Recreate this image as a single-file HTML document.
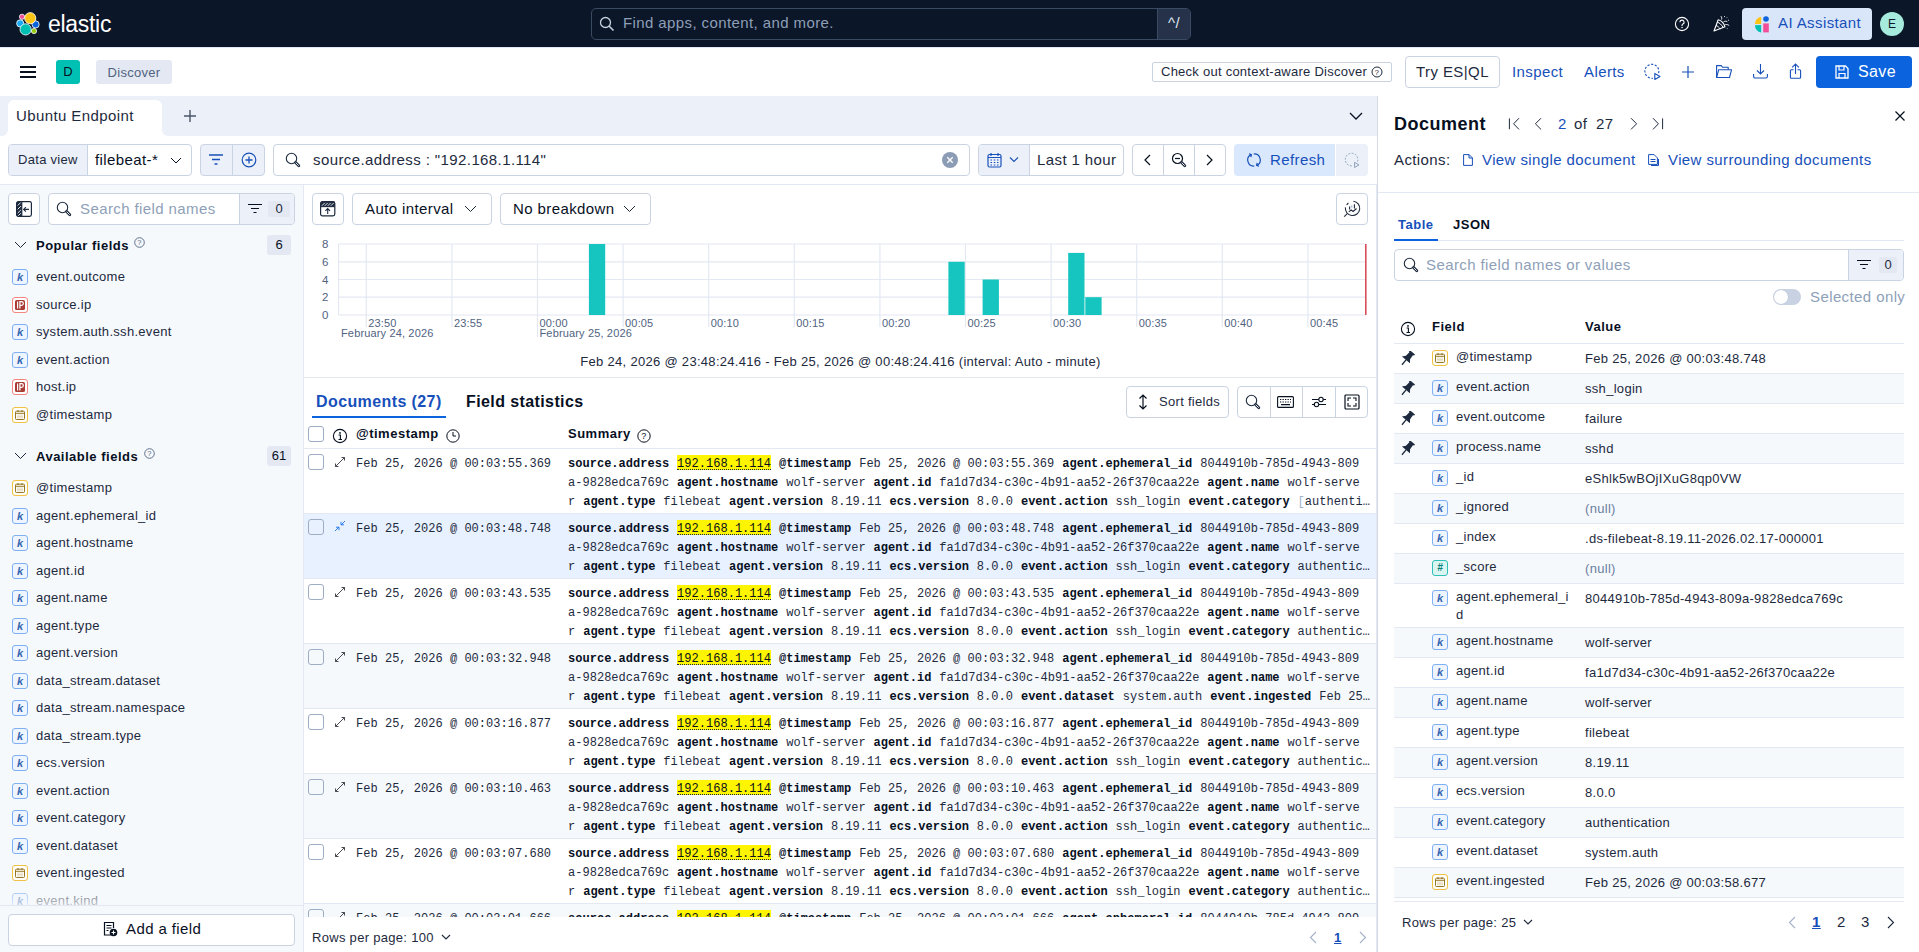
<!DOCTYPE html><html><head><meta charset="utf-8"><title>Discover - Elastic</title><style>
*{box-sizing:border-box}
html,body{margin:0;padding:0}
body{width:1919px;height:952px;overflow:hidden;position:relative;background:#fff;font-family:"Liberation Sans",sans-serif;color:#1d2a3e;font-size:15px;letter-spacing:.4px}
.a{position:absolute}
.s14{font-size:15px;letter-spacing:.4px}
.s12{font-size:13px;letter-spacing:.3px}
.b12{font-size:13px;font-weight:bold;letter-spacing:.5px}
.b14{font-size:16px;font-weight:bold;letter-spacing:.4px}
.mono{font-family:"Liberation Mono",monospace;font-size:12px;letter-spacing:.024px}
.nw{white-space:nowrap}
svg{display:block}
.btn{position:absolute;border:1px solid #cad3e2;border-radius:4px;background:#fff}
.link{color:#1750ba}
.tok{position:absolute;width:16px;height:16px;border-radius:3px;border:1px solid #7fb0f5;background:#eef5ff;color:#3565b0;font-size:11px;font-weight:bold;font-style:italic;text-align:center;line-height:14px;letter-spacing:0}
.tok.ip{border-color:#e06b6b;background:#b74b40;color:#fff;font-style:normal;font-size:9px}
.tok.date{border-color:#e0b11a;background:#fdf3d8;color:#8a6a0a}
.tok.num{border-color:#2fbfb6;background:#d9f6f3;color:#0a7d77}
</style></head><body>
<div class="a" style="left:0;top:0;width:1919px;height:47px;background:#0b1628"></div>
<svg class="a" style="left:14px;top:10px" width="28" height="28" viewBox="14 10 28 28">
<g stroke="#fff" stroke-width=".8">
<circle cx="22" cy="16.8" r="2.6" fill="#f04e98"/><circle cx="20.2" cy="23.4" r="3.6" fill="#1ba9f5"/>
<circle cx="35.6" cy="24.4" r="3.6" fill="#0b64dd"/><circle cx="34" cy="31" r="2.6" fill="#93c90e"/>
<circle cx="30.2" cy="18.2" r="5.6" fill="#fec514"/><circle cx="25.6" cy="29.4" r="5.6" fill="#00bfb3"/></g></svg>
<div class="a nw" style="left:48px;top:10px;font-size:23px;letter-spacing:-.3px;color:#fff;line-height:28px">elastic</div>
<div class="a" style="left:591px;top:8px;width:600px;height:32px;border:1px solid #3b4a63;border-radius:5px;background:#0b1628"></div>
<div class="a" style="left:1157px;top:9px;width:33px;height:30px;background:#25324a;border-radius:0 4px 4px 0;border-left:1px solid #3b4a63;color:#dfe5ef;font-size:15px;text-align:center;line-height:28px">^/</div>
<svg class="a" style="left:599px;top:16px" width="16" height="16" viewBox="0 0 16 16"><circle cx="6.5" cy="6.5" r="5" fill="none" stroke="#c7d0dd" stroke-width="1.3"/><path d="M10 10l4.5 4.5" stroke="#c7d0dd" stroke-width="1.6"/></svg>
<div class="a nw" style="left:623px;top:14px;color:#8e9fb8;line-height:18px">Find apps, content, and more.</div>
<svg class="a" style="left:1674px;top:16px" width="16" height="16" viewBox="0 0 16 16"><circle cx="8" cy="8" r="6.6" fill="none" stroke="#fff" stroke-width="1.1"/><path d="M5.9 6.2a2.1 2.1 0 1 1 3 1.9c-.6.3-.9.7-.9 1.3v.5" fill="none" stroke="#fff" stroke-width="1.1"/><circle cx="8" cy="11.6" r=".75" fill="#fff"/></svg>
<svg class="a" style="left:1713px;top:15px" width="18" height="17" viewBox="0 0 18 17"><path d="M1 16l4.2-11.2c2.6.6 5.6 3.4 6.8 7z" fill="none" stroke="#fff" stroke-width="1.1" stroke-linejoin="round"/><path d="M3 10.6c1.6.4 3.4 1.8 4.3 3.6M4.3 7.2c2.2.6 4.4 2.6 5.6 5" fill="none" stroke="#fff" stroke-width="1"/><path d="M8.5 4.5c.5-1.3.2-2.4-.6-3.3M10.5 7c1.2-.9 2.6-1 3.8-.4M12.3 9.6c1.4-.3 2.8.1 3.9 1M11.5 1.2v.8M14 2.5l-.5.6M16 5.2h-.8M13.8 13l.5.6" fill="none" stroke="#fff" stroke-width="1"/></svg>
<div class="a" style="left:1742px;top:8px;width:130px;height:32px;background:#d9e6f9;border-radius:4px"></div>
<svg class="a" style="left:1755px;top:16px" width="15" height="17" viewBox="0 0 15 17"><path d="M0 8A7 7 0 0 1 6.2 .8V8z" fill="#fec514"/><path d="M6.2 9v7.4A7 7 0 0 1 0 9.2z" fill="#00bfb3"/><circle cx="11" cy="3" r="2.8" fill="#0b64dd"/><rect x="8.2" y="7.4" width="5.6" height="9" fill="#f04e98"/></svg>
<div class="a nw" style="left:1778px;top:14px;color:#1750ba;line-height:18px">AI Assistant</div>
<div class="a" style="left:1880px;top:12px;width:24px;height:24px;border-radius:50%;background:#a6e9dd;color:#0b1628;font-size:12px;text-align:center;line-height:24px;letter-spacing:0">E</div>
<div class="a" style="left:0;top:47px;width:1919px;height:49px;background:#fff;border-top:1px solid #e3e8f2"></div>
<div class="a" style="left:20px;top:66px;width:16px;height:2px;background:#07101f;box-shadow:0 5px 0 #07101f,0 10px 0 #07101f"></div>
<div class="a" style="left:56px;top:60px;width:24px;height:24px;border-radius:3px;background:#00bfb3;color:#07101f;font-size:13px;text-align:center;line-height:24px;letter-spacing:0">D</div>
<div class="a nw" style="left:96px;top:60px;width:76px;height:24px;border-radius:3px;background:#e3e8f2;color:#516381;font-size:13px;text-align:center;line-height:26px;letter-spacing:.3px">Discover</div>
<div class="a nw" style="left:1152px;top:62px;width:240px;height:20px;border:1px solid #cad3e2;border-radius:2px;font-size:13px;line-height:18px;padding-left:8px;letter-spacing:.25px;color:#1d2a3e">Check out context-aware Discover</div>
<svg class="a" style="left:1371px;top:66px" width="12" height="12" viewBox="0 0 12 12"><circle cx="6" cy="6" r="5" fill="none" stroke="#1d2a3e" stroke-width="1"/><text x="6" y="9" font-size="8" text-anchor="middle" fill="#1d2a3e" font-family="Liberation Sans">?</text></svg>
<div class="btn nw" style="left:1405px;top:56px;width:95px;height:32px;text-align:center;line-height:30px;color:#1d2a3e">Try ES|QL</div>
<div class="a nw link" style="left:1512px;top:62px;line-height:20px">Inspect</div>
<div class="a nw link" style="left:1584px;top:62px;line-height:20px">Alerts</div>
<svg class="a" style="left:1644px;top:63px" width="18" height="18" viewBox="0 0 18 18"><path d="M14.6 10.2A7 7 0 1 0 9 15.2" fill="none" stroke="#1750ba" stroke-width="1.1" stroke-dasharray="2.2 1.6"/><path d="M10.8 10.4v6l5.2-3z" fill="#fff" stroke="#1750ba" stroke-width="1.1" stroke-linejoin="round"/></svg>
<svg class="a" style="left:1681px;top:65px" width="14" height="14" viewBox="0 0 14 14"><path d="M7 1v12M1 7h12" stroke="#1750ba" stroke-width="1.2"/></svg>
<svg class="a" style="left:1715px;top:64px" width="18" height="15" viewBox="0 0 18 15"><path d="M1.6 13.5V1.6h4.6l1.5 1.7h5.5v2.4" fill="none" stroke="#1750ba" stroke-width="1.1" stroke-linejoin="round"/><path d="M1.6 13.5l2.1-7.8h12.9l-2.1 7.8z" fill="none" stroke="#1750ba" stroke-width="1.1" stroke-linejoin="round"/></svg>
<svg class="a" style="left:1752px;top:63px" width="17" height="17" viewBox="0 0 17 17"><path d="M8.5 1v10M5 7.5l3.5 3.5L12 7.5" fill="none" stroke="#1750ba" stroke-width="1.1"/><path d="M1.6 11v2.6a1.4 1.4 0 0 0 1.4 1.4h11a1.4 1.4 0 0 0 1.4-1.4V11" fill="none" stroke="#1750ba" stroke-width="1.1"/></svg>
<svg class="a" style="left:1789px;top:63px" width="13" height="17" viewBox="0 0 13 17"><path d="M6.5 11V1.2M3.2 4.4L6.5 1.1l3.3 3.3" fill="none" stroke="#1750ba" stroke-width="1.1"/><path d="M4.5 6.8H2.4a1 1 0 0 0-1 1v6.4a1 1 0 0 0 1 1h8.2a1 1 0 0 0 1-1V7.8a1 1 0 0 0-1-1H8.5" fill="none" stroke="#1750ba" stroke-width="1.1"/></svg>
<div class="a" style="left:1816px;top:56px;width:96px;height:32px;background:#0b64dd;border-radius:4px"></div>
<svg class="a" style="left:1834px;top:64px" width="16" height="16" viewBox="0 0 16 16"><path d="M2 2h9.5L14 4.5V14H2z" fill="none" stroke="#fff" stroke-width="1.3"/><path d="M5 2v4h5V2M5 14V9.5h6V14" fill="none" stroke="#fff" stroke-width="1.2"/></svg>
<div class="a nw" style="left:1858px;top:62px;line-height:20px;color:#fff;font-size:16px">Save</div>
<div class="a" style="left:0;top:96px;width:8px;height:40px;background:#ecf1f9;border-radius:0 0 6px 0"></div>
<div class="a" style="left:162px;top:96px;width:1215px;height:40px;background:#ecf1f9;border-radius:0 0 0 6px"></div>
<div class="a" style="left:0;top:96px;width:1377px;height:14px;background:#ecf1f9"></div>
<div class="a nw" style="left:8px;top:100px;width:154px;height:36px;background:#fff;border-radius:6px 6px 0 0;padding-left:8px;line-height:31px">Ubuntu Endpoint</div>
<svg class="a" style="left:184px;top:110px" width="12" height="12" viewBox="0 0 12 12"><path d="M6 0v12M0 6h12" stroke="#4a5568" stroke-width="1.4"/></svg>
<svg class="a" style="left:1349px;top:112px" width="14" height="9" viewBox="0 0 14 9"><path d="M1 1l6 6 6-6" fill="none" stroke="#07101f" stroke-width="1.3"/></svg>
<div class="a" style="left:0;top:184px;width:1377px;height:1px;background:#e3e8f2"></div>
<div class="btn" style="left:8px;top:144px;width:184px;height:32px;background:#fff"></div>
<div class="a" style="left:9px;top:145px;width:79px;height:30px;background:#ecf1f9;border-right:1px solid #cad3e2;border-radius:3px 0 0 3px"></div>
<div class="a nw s12" style="left:18px;top:152px;line-height:16px;color:#1d2a3e">Data view</div>
<div class="a nw" style="left:95px;top:151px;line-height:18px;color:#07101f">filebeat-*</div>
<svg class="a" style="left:170px;top:157px" width="12" height="8" viewBox="0 0 12 8"><path d="M1 1l5 5 5-5" fill="none" stroke="#07101f" stroke-width="1"/></svg>
<div class="btn" style="left:200px;top:144px;width:65px;height:32px;background:#ecf1f9"></div>
<div class="a" style="left:232px;top:145px;width:1px;height:30px;background:#cad3e2"></div>
<svg class="a" style="left:208px;top:153px" width="16" height="14" viewBox="0 0 16 14"><path d="M1 2h14M4 6.5h8M6.5 11h3" stroke="#1750ba" stroke-width="1.3"/></svg>
<svg class="a" style="left:241px;top:152px" width="16" height="16" viewBox="0 0 16 16"><circle cx="8" cy="8" r="6.8" fill="none" stroke="#1750ba" stroke-width="1.2"/><path d="M8 4.5v7M4.5 8h7" stroke="#1750ba" stroke-width="1.3"/></svg>
<div class="btn" style="left:273px;top:144px;width:697px;height:32px"></div>
<svg class="a" style="left:285px;top:152px" width="16" height="16" viewBox="0 0 16 16"><circle cx="6.5" cy="6.5" r="5.2" fill="none" stroke="#1d2a3e" stroke-width="1.1"/><path d="M10.6 10.6l3.2 3.2" stroke="#1d2a3e" stroke-width="2.8" stroke-linecap="round"/><path d="M10.9 10.9l2.6 2.6" stroke="#fff" stroke-width=".9" stroke-linecap="round"/></svg>
<div class="a nw" style="left:313px;top:151px;line-height:18px;color:#1d2a3e">source.address : "192.168.1.114"</div>
<svg class="a" style="left:942px;top:152px" width="16" height="16" viewBox="0 0 16 16"><circle cx="8" cy="8" r="8" fill="#8d9cb5"/><path d="M5.3 5.3l5.4 5.4M10.7 5.3l-5.4 5.4" stroke="#fff" stroke-width="1.3"/></svg>
<div class="btn" style="left:978px;top:144px;width:146px;height:32px"></div>
<div class="a" style="left:979px;top:145px;width:51px;height:30px;background:#ecf1f9;border-right:1px solid #cad3e2;border-radius:3px 0 0 3px"></div>
<svg class="a" style="left:987px;top:152px" width="15" height="16" viewBox="0 0 15 16"><rect x="1" y="2.5" width="13" height="12.5" rx="1.5" fill="none" stroke="#1750ba" stroke-width="1.2"/><path d="M1 5.5h13M4 1v3M11 1v3" stroke="#1750ba" stroke-width="1.2"/><path d="M3.5 8h1.5M6.8 8h1.5M10 8h1.5M3.5 10.5h1.5M6.8 10.5h1.5M10 10.5h1.5M3.5 13h1.5M6.8 13h1.5M10 13h1.5" stroke="#1750ba" stroke-width="1.2"/></svg>
<svg class="a" style="left:1009px;top:157px" width="10" height="6" viewBox="0 0 10 6"><path d="M1 .5l4 4 4-4" fill="none" stroke="#1750ba" stroke-width="1.1"/></svg>
<div class="a nw" style="left:1037px;top:151px;line-height:18px;color:#1d2a3e">Last 1 hour</div>
<div class="btn" style="left:1132px;top:144px;width:94px;height:32px"></div>
<div class="a" style="left:1163px;top:145px;width:1px;height:30px;background:#cad3e2"></div>
<div class="a" style="left:1194px;top:145px;width:1px;height:30px;background:#cad3e2"></div>
<svg class="a" style="left:1143px;top:154px" width="8" height="12" viewBox="0 0 8 12"><path d="M7 1L2 6l5 5" fill="none" stroke="#07101f" stroke-width="1.2"/></svg>
<svg class="a" style="left:1171px;top:152px" width="16" height="16" viewBox="0 0 16 16"><circle cx="6.5" cy="6.5" r="5" fill="none" stroke="#07101f" stroke-width="1.2"/><path d="M4 6.5h5" stroke="#07101f" stroke-width="1.2"/><path d="M10.6 10.6l3.2 3.2" stroke="#1d2a3e" stroke-width="2.8" stroke-linecap="round"/><path d="M10.9 10.9l2.6 2.6" stroke="#fff" stroke-width=".9" stroke-linecap="round"/></svg>
<svg class="a" style="left:1206px;top:154px" width="8" height="12" viewBox="0 0 8 12"><path d="M1 1l5 5-5 5" fill="none" stroke="#07101f" stroke-width="1.2"/></svg>
<div class="a" style="left:1234px;top:144px;width:101px;height:32px;background:#d9e8fd;border-radius:4px 0 0 4px"></div>
<div class="a" style="left:1336px;top:144px;width:32px;height:32px;background:#ecf1f9;border-radius:0 4px 4px 0"></div>
<svg class="a" style="left:1246px;top:152px" width="16" height="16" viewBox="0 0 16 16"><path d="M5.2 2.6A6 6 0 0 0 8.3 14M10.8 13.4A6 6 0 0 0 7.7 2" fill="none" stroke="#1750ba" stroke-width="1.2"/><path d="M3 1.8l2.4.9-.6 2.5M13 14.2l-2.4-.9.6-2.5" fill="none" stroke="#1750ba" stroke-width="1.2"/></svg>
<div class="a nw link" style="left:1270px;top:151px;line-height:18px">Refresh</div>
<svg class="a" style="left:1344px;top:152px" width="17" height="17" viewBox="0 0 17 17"><path d="M13.6 9.5A6.3 6.3 0 1 0 9 13.7" fill="none" stroke="#8e9fb8" stroke-width="1" stroke-dasharray="1.8 1.5"/><path d="M10.6 10.3v5.2l4.4-2.6z" fill="#ecf1f9" stroke="#8e9fb8" stroke-width="1"/></svg>
<div class="a" style="left:0;top:185px;width:304px;height:767px;background:#f6f9fc;border-right:1px solid #e3e8f2"></div>
<div class="btn" style="left:8px;top:193px;width:32px;height:32px"></div>
<svg class="a" style="left:16px;top:201px" width="16" height="16" viewBox="0 0 16 16"><rect x=".6" y=".6" width="5.2" height="14.8" rx="1.5" fill="#1d2a3e"/><path d="M1.6 4.6l3.2-3.2M1.6 8.4l3.2-3.2M1.6 12.2l3.2-3.2M1.8 15.2l3-3" stroke="#fff" stroke-width=".9"/><rect x=".6" y=".6" width="14.8" height="14.8" rx="1.8" fill="none" stroke="#1d2a3e" stroke-width="1.2"/><path d="M5.8 .6v14.8" stroke="#1d2a3e" stroke-width="1.1"/><path d="M13 8.4H7.6M9.9 6.1L7.6 8.4l2.3 2.3" fill="none" stroke="#1d2a3e" stroke-width="1.1"/></svg>
<div class="btn" style="left:48px;top:193px;width:247px;height:32px"></div>
<div class="a" style="left:239px;top:194px;width:55px;height:30px;background:#ecf1f9;border-left:1px solid #cad3e2;border-radius:0 3px 3px 0"></div>
<svg class="a" style="left:56px;top:201px" width="16" height="16" viewBox="0 0 16 16"><circle cx="6.5" cy="6.5" r="5.2" fill="none" stroke="#1d2a3e" stroke-width="1.1"/><path d="M10.6 10.6l3.2 3.2" stroke="#1d2a3e" stroke-width="2.8" stroke-linecap="round"/><path d="M10.9 10.9l2.6 2.6" stroke="#fff" stroke-width=".9" stroke-linecap="round"/></svg>
<div class="a nw" style="left:80px;top:200px;line-height:18px;color:#8e9fb8">Search field names</div>
<svg class="a" style="left:247px;top:203px" width="16" height="13" viewBox="0 0 16 13"><path d="M1 1.5h14M4 5.5h8M6.5 9.5h3" stroke="#07101f" stroke-width="1.1"/></svg>
<div class="a s12" style="left:268px;top:201px;width:22px;height:16px;background:#e3e8f2;border-radius:2px;text-align:center;line-height:16px;letter-spacing:0">0</div>
<svg class="a" style="left:14px;top:241px" width="13" height="8" viewBox="0 0 13 8"><path d="M1 1l5.5 5.5L12 1" fill="none" stroke="#1d2a3e" stroke-width="1"/></svg>
<div class="a nw b12" style="left:36px;top:238px;line-height:16px;color:#07101f">Popular fields</div>
<svg class="a" style="left:134px;top:237px" width="11" height="11" viewBox="0 0 11 11"><circle cx="5.5" cy="5.5" r="4.8" fill="none" stroke="#516381" stroke-width=".9"/><text x="5.5" y="8.3" font-size="7.5" text-anchor="middle" fill="#516381" font-family="Liberation Sans">?</text></svg>
<div class="a s12" style="left:267px;top:235px;width:24px;height:20px;background:#e3e8f2;border-radius:3px;text-align:center;line-height:20px;letter-spacing:0;color:#07101f">6</div>
<div class="tok" style="left:12px;top:269px">k</div>
<div class="a nw s12" style="left:36px;top:268.0px;line-height:18px;color:#1d2a3e">event.outcome</div>
<div class="a" style="left:12px;top:297px;width:16px;height:16px;border:1px solid #f3867e;border-radius:3px;background:#fff"></div><svg class="a" style="left:12px;top:297px" width="16" height="16" viewBox="0 0 16 16"><rect x="3" y="3" width="10" height="10" rx="1.6" fill="#a83c35"/><path d="M5.6 4.6v6.8M7.9 11.4V4.6h1.6a1.8 1.8 0 0 1 0 3.7H7.9" fill="none" stroke="#fff" stroke-width="1.2"/></svg>
<div class="a nw s12" style="left:36px;top:295.6px;line-height:18px;color:#1d2a3e">source.ip</div>
<div class="tok" style="left:12px;top:324px">k</div>
<div class="a nw s12" style="left:36px;top:323.2px;line-height:18px;color:#1d2a3e">system.auth.ssh.event</div>
<div class="tok" style="left:12px;top:352px">k</div>
<div class="a nw s12" style="left:36px;top:350.8px;line-height:18px;color:#1d2a3e">event.action</div>
<div class="a" style="left:12px;top:379px;width:16px;height:16px;border:1px solid #f3867e;border-radius:3px;background:#fff"></div><svg class="a" style="left:12px;top:379px" width="16" height="16" viewBox="0 0 16 16"><rect x="3" y="3" width="10" height="10" rx="1.6" fill="#a83c35"/><path d="M5.6 4.6v6.8M7.9 11.4V4.6h1.6a1.8 1.8 0 0 1 0 3.7H7.9" fill="none" stroke="#fff" stroke-width="1.2"/></svg>
<div class="a nw s12" style="left:36px;top:378.4px;line-height:18px;color:#1d2a3e">host.ip</div>
<div class="a" style="left:12px;top:407px;width:16px;height:16px;border:1px solid #f0c040;border-radius:3px;background:#fffdf7"></div><svg class="a" style="left:14px;top:409px" width="12" height="12" viewBox="0 0 12 12"><rect x="1.5" y="2.2" width="9" height="8.3" rx="1" fill="none" stroke="#8a6a10" stroke-width=".9"/><path d="M1.5 4.3h9M4 1v2M8 1v2" stroke="#8a6a10" stroke-width=".9"/><path d="M4 5.6v3.8M6 5.6v3.8M8 5.6v3.8" stroke="#a08030" stroke-width=".6" stroke-dasharray=".9 .5"/></svg>
<div class="a nw s12" style="left:36px;top:406.0px;line-height:18px;color:#1d2a3e">@timestamp</div>
<svg class="a" style="left:14px;top:452px" width="13" height="8" viewBox="0 0 13 8"><path d="M1 1l5.5 5.5L12 1" fill="none" stroke="#1d2a3e" stroke-width="1"/></svg>
<div class="a nw b12" style="left:36px;top:449px;line-height:16px;color:#07101f">Available fields</div>
<svg class="a" style="left:144px;top:448px" width="11" height="11" viewBox="0 0 11 11"><circle cx="5.5" cy="5.5" r="4.8" fill="none" stroke="#516381" stroke-width=".9"/><text x="5.5" y="8.3" font-size="7.5" text-anchor="middle" fill="#516381" font-family="Liberation Sans">?</text></svg>
<div class="a s12" style="left:267px;top:446px;width:24px;height:20px;background:#e3e8f2;border-radius:3px;text-align:center;line-height:20px;letter-spacing:0;color:#07101f">61</div>
<div class="a" style="left:0;top:470px;width:302px;height:436px;overflow:hidden">
<div class="a" style="left:12px;top:10px;width:16px;height:16px;border:1px solid #f0c040;border-radius:3px;background:#fffdf7"></div><svg class="a" style="left:14px;top:12px" width="12" height="12" viewBox="0 0 12 12"><rect x="1.5" y="2.2" width="9" height="8.3" rx="1" fill="none" stroke="#8a6a10" stroke-width=".9"/><path d="M1.5 4.3h9M4 1v2M8 1v2" stroke="#8a6a10" stroke-width=".9"/><path d="M4 5.6v3.8M6 5.6v3.8M8 5.6v3.8" stroke="#a08030" stroke-width=".6" stroke-dasharray=".9 .5"/></svg>
<div class="a nw s12" style="left:36px;top:9.0px;line-height:18px;color:#1d2a3e">@timestamp</div>
<div class="tok" style="left:12px;top:38px">k</div>
<div class="a nw s12" style="left:36px;top:36.5px;line-height:18px;color:#1d2a3e">agent.ephemeral_id</div>
<div class="tok" style="left:12px;top:65px">k</div>
<div class="a nw s12" style="left:36px;top:64.1px;line-height:18px;color:#1d2a3e">agent.hostname</div>
<div class="tok" style="left:12px;top:93px">k</div>
<div class="a nw s12" style="left:36px;top:91.6px;line-height:18px;color:#1d2a3e">agent.id</div>
<div class="tok" style="left:12px;top:120px">k</div>
<div class="a nw s12" style="left:36px;top:119.1px;line-height:18px;color:#1d2a3e">agent.name</div>
<div class="tok" style="left:12px;top:148px">k</div>
<div class="a nw s12" style="left:36px;top:146.6px;line-height:18px;color:#1d2a3e">agent.type</div>
<div class="tok" style="left:12px;top:175px">k</div>
<div class="a nw s12" style="left:36px;top:174.2px;line-height:18px;color:#1d2a3e">agent.version</div>
<div class="tok" style="left:12px;top:203px">k</div>
<div class="a nw s12" style="left:36px;top:201.7px;line-height:18px;color:#1d2a3e">data_stream.dataset</div>
<div class="tok" style="left:12px;top:230px">k</div>
<div class="a nw s12" style="left:36px;top:229.2px;line-height:18px;color:#1d2a3e">data_stream.namespace</div>
<div class="tok" style="left:12px;top:258px">k</div>
<div class="a nw s12" style="left:36px;top:256.8px;line-height:18px;color:#1d2a3e">data_stream.type</div>
<div class="tok" style="left:12px;top:285px">k</div>
<div class="a nw s12" style="left:36px;top:284.3px;line-height:18px;color:#1d2a3e">ecs.version</div>
<div class="tok" style="left:12px;top:313px">k</div>
<div class="a nw s12" style="left:36px;top:311.8px;line-height:18px;color:#1d2a3e">event.action</div>
<div class="tok" style="left:12px;top:340px">k</div>
<div class="a nw s12" style="left:36px;top:339.4px;line-height:18px;color:#1d2a3e">event.category</div>
<div class="tok" style="left:12px;top:368px">k</div>
<div class="a nw s12" style="left:36px;top:366.9px;line-height:18px;color:#1d2a3e">event.dataset</div>
<div class="a" style="left:12px;top:395px;width:16px;height:16px;border:1px solid #f0c040;border-radius:3px;background:#fffdf7"></div><svg class="a" style="left:14px;top:397px" width="12" height="12" viewBox="0 0 12 12"><rect x="1.5" y="2.2" width="9" height="8.3" rx="1" fill="none" stroke="#8a6a10" stroke-width=".9"/><path d="M1.5 4.3h9M4 1v2M8 1v2" stroke="#8a6a10" stroke-width=".9"/><path d="M4 5.6v3.8M6 5.6v3.8M8 5.6v3.8" stroke="#a08030" stroke-width=".6" stroke-dasharray=".9 .5"/></svg>
<div class="a nw s12" style="left:36px;top:394.4px;line-height:18px;color:#1d2a3e">event.ingested</div>
<div class="tok" style="left:12px;top:423px">k</div>
<div class="a nw s12" style="left:36px;top:422.0px;line-height:18px;color:#1d2a3e">event.kind</div>
</div>
<div class="a" style="left:0;top:880px;width:302px;height:25px;background:linear-gradient(rgba(246,249,252,0),rgba(246,249,252,.75))"></div>
<div class="a" style="left:0;top:905px;width:303px;height:47px;background:#f6f9fc;border-top:1px solid #e3e8f2"></div>
<div class="btn" style="left:8px;top:914px;width:287px;height:32px"></div>
<svg class="a" style="left:102px;top:921px" width="16" height="16" viewBox="0 0 16 16"><path d="M9 14H2.5V1.5h9V7" fill="none" stroke="#07101f" stroke-width="1.2"/><path d="M4.5 4.5h5M4.5 7h5M4.5 9.5h2" stroke="#07101f" stroke-width="1.1"/><circle cx="11.5" cy="11.5" r="3.8" fill="#07101f"/><path d="M11.5 9.5v4M9.5 11.5h4" stroke="#fff" stroke-width="1.1"/></svg>
<div class="a nw" style="left:126px;top:920px;line-height:18px;color:#07101f">Add a field</div>
<div class="a" style="left:1376px;top:185px;width:1px;height:767px;background:#e3e8f2"></div>
<div class="btn" style="left:312px;top:193px;width:32px;height:32px"></div>
<svg class="a" style="left:320px;top:201px" width="16" height="16" viewBox="0 0 16 16"><rect x=".6" y=".6" width="14.2" height="5" rx="1.5" fill="#1d2a3e"/><path d="M1.8 4.8l3-3M4.8 4.8l3-3M7.8 4.8l3-3M10.8 4.8l3-3" stroke="#fff" stroke-width=".9"/><rect x=".6" y=".6" width="14.2" height="14.2" rx="1.8" fill="none" stroke="#1d2a3e" stroke-width="1.2"/><path d="M.6 5.6h14.2" stroke="#1d2a3e" stroke-width="1.1"/><path d="M7.7 13V7.6M5.4 9.8l2.3-2.3 2.3 2.3" fill="none" stroke="#1d2a3e" stroke-width="1.1"/></svg>
<div class="btn" style="left:352px;top:193px;width:140px;height:32px"></div>
<div class="a nw" style="left:365px;top:200px;line-height:18px;color:#07101f">Auto interval</div>
<svg class="a" style="left:464px;top:205px" width="13" height="8" viewBox="0 0 13 8"><path d="M1 1l5.5 5.5L12 1" fill="none" stroke="#1d2a3e" stroke-width="1"/></svg>
<div class="btn" style="left:500px;top:193px;width:151px;height:32px"></div>
<div class="a nw" style="left:513px;top:200px;line-height:18px;color:#07101f">No breakdown</div>
<svg class="a" style="left:623px;top:205px" width="13" height="8" viewBox="0 0 13 8"><path d="M1 1l5.5 5.5L12 1" fill="none" stroke="#1d2a3e" stroke-width="1"/></svg>
<div class="btn" style="left:1336px;top:193px;width:32px;height:32px"></div>
<svg class="a" style="left:1343px;top:200px" width="18" height="18" viewBox="0 0 18 18"><path d="M10.4 1.2A7.2 7.2 0 1 1 2.4 7.4" fill="none" stroke="#1d2a3e" stroke-width="1.1"/><path d="M3.6 4.8l1.8-1.8" stroke="#1d2a3e" stroke-width="1.1"/><path d="M1.2 16.6L4.3 13.6" stroke="#1d2a3e" stroke-width="1.1"/><path d="M6.6 6.5v3M11.4 4.2v4.4" stroke="#1d2a3e" stroke-width="1.1"/><path d="M8.8 5.5v2" stroke="#8e9fb8" stroke-width="1"/><path d="M5.8 11.8l2.3-1.9 2 1.6 3.4-3" fill="none" stroke="#1d2a3e" stroke-width="1.1"/></svg>
<svg class="a" style="left:0;top:0" width="1377" height="380" viewBox="0 0 1377 380"><path d="M338.5 244.0H1366" stroke="#e3e8f2" stroke-width="1.2"/><path d="M338.5 261.8H1366" stroke="#e3e8f2" stroke-width="1.2"/><path d="M338.5 279.5H1366" stroke="#e3e8f2" stroke-width="1.2"/><path d="M338.5 297.2H1366" stroke="#e3e8f2" stroke-width="1.2"/><path d="M338.5 315.0H1366" stroke="#e3e8f2" stroke-width="1.2"/><path d="M338.5 244V315" stroke="#e3e8f2" stroke-width="1.2"/><path d="M366.3 244V327" stroke="#e3e8f2" stroke-width="1.2"/><text x="368.3" y="326.5" font-size="11" fill="#516381" font-family="Liberation Sans" letter-spacing=".15">23:50</text><path d="M451.9 244V327" stroke="#e3e8f2" stroke-width="1.2"/><text x="453.9" y="326.5" font-size="11" fill="#516381" font-family="Liberation Sans" letter-spacing=".15">23:55</text><path d="M537.5 244V337" stroke="#e3e8f2" stroke-width="1.2"/><text x="539.5" y="326.5" font-size="11" fill="#516381" font-family="Liberation Sans" letter-spacing=".15">00:00</text><path d="M623.1 244V327" stroke="#e3e8f2" stroke-width="1.2"/><text x="625.1" y="326.5" font-size="11" fill="#516381" font-family="Liberation Sans" letter-spacing=".15">00:05</text><path d="M708.7 244V327" stroke="#e3e8f2" stroke-width="1.2"/><text x="710.7" y="326.5" font-size="11" fill="#516381" font-family="Liberation Sans" letter-spacing=".15">00:10</text><path d="M794.3 244V327" stroke="#e3e8f2" stroke-width="1.2"/><text x="796.3" y="326.5" font-size="11" fill="#516381" font-family="Liberation Sans" letter-spacing=".15">00:15</text><path d="M879.9 244V327" stroke="#e3e8f2" stroke-width="1.2"/><text x="881.9" y="326.5" font-size="11" fill="#516381" font-family="Liberation Sans" letter-spacing=".15">00:20</text><path d="M965.5 244V327" stroke="#e3e8f2" stroke-width="1.2"/><text x="967.5" y="326.5" font-size="11" fill="#516381" font-family="Liberation Sans" letter-spacing=".15">00:25</text><path d="M1051.1 244V327" stroke="#e3e8f2" stroke-width="1.2"/><text x="1053.1" y="326.5" font-size="11" fill="#516381" font-family="Liberation Sans" letter-spacing=".15">00:30</text><path d="M1136.7 244V327" stroke="#e3e8f2" stroke-width="1.2"/><text x="1138.7" y="326.5" font-size="11" fill="#516381" font-family="Liberation Sans" letter-spacing=".15">00:35</text><path d="M1222.3 244V327" stroke="#e3e8f2" stroke-width="1.2"/><text x="1224.3" y="326.5" font-size="11" fill="#516381" font-family="Liberation Sans" letter-spacing=".15">00:40</text><path d="M1307.9 244V327" stroke="#e3e8f2" stroke-width="1.2"/><text x="1309.9" y="326.5" font-size="11" fill="#516381" font-family="Liberation Sans" letter-spacing=".15">00:45</text><text x="341" y="337" font-size="11" fill="#516381" font-family="Liberation Sans" letter-spacing=".15">February 24, 2026</text><text x="539.5" y="337" font-size="11" fill="#516381" font-family="Liberation Sans" letter-spacing=".15">February 25, 2026</text><text x="325.5" y="248.0" font-size="11.5" text-anchor="middle" fill="#516381" font-family="Liberation Sans">8</text><text x="325.5" y="265.8" font-size="11.5" text-anchor="middle" fill="#516381" font-family="Liberation Sans">6</text><text x="325.5" y="283.5" font-size="11.5" text-anchor="middle" fill="#516381" font-family="Liberation Sans">4</text><text x="325.5" y="301.2" font-size="11.5" text-anchor="middle" fill="#516381" font-family="Liberation Sans">2</text><text x="325.5" y="319.0" font-size="11.5" text-anchor="middle" fill="#516381" font-family="Liberation Sans">0</text><rect x="588.9" y="244.0" width="16.3" height="71.0" fill="#16c5c0"/><rect x="948.4" y="261.8" width="16.3" height="53.2" fill="#16c5c0"/><rect x="982.6" y="279.5" width="16.3" height="35.5" fill="#16c5c0"/><rect x="1068.2" y="252.9" width="16.3" height="62.1" fill="#16c5c0"/><rect x="1085.3" y="297.2" width="16.3" height="17.8" fill="#16c5c0"/><rect x="1365" y="244" width="1.6" height="71" fill="#d4505a"/></svg>
<div class="a nw s12" style="left:302px;top:353px;width:1077px;text-align:center;line-height:18px;color:#1d2a3e">Feb 24, 2026 @ 23:48:24.416 - Feb 25, 2026 @ 00:48:24.416 (interval: Auto - minute)</div>
<div class="a" style="left:304px;top:377px;width:1072px;height:1px;background:#e3e8f2"></div>
<div class="a nw b14" style="left:316px;top:392px;line-height:20px;color:#1750ba">Documents (27)</div>
<div class="a" style="left:312px;top:416px;width:134px;height:2px;background:#0b64dd"></div>
<div class="a nw b14" style="left:466px;top:392px;line-height:20px;color:#07101f">Field statistics</div>
<div class="btn" style="left:1126px;top:386px;width:103px;height:32px"></div>
<svg class="a" style="left:1137px;top:394px" width="12" height="16" viewBox="0 0 12 16"><path d="M6 1v14M2.5 4.5L6 1l3.5 3.5M2.5 11.5L6 15l3.5-3.5" fill="none" stroke="#07101f" stroke-width="1.2"/></svg>
<div class="a nw s12" style="left:1159px;top:393px;line-height:18px;color:#1d2a3e">Sort fields</div>
<div class="btn" style="left:1237px;top:386px;width:131px;height:32px"></div>
<div class="a" style="left:1270px;top:387px;width:1px;height:30px;background:#cad3e2"></div>
<div class="a" style="left:1302px;top:387px;width:1px;height:30px;background:#cad3e2"></div>
<div class="a" style="left:1335px;top:387px;width:1px;height:30px;background:#cad3e2"></div>
<svg class="a" style="left:1245px;top:394px" width="16" height="16" viewBox="0 0 16 16"><circle cx="6.5" cy="6.5" r="5.2" fill="none" stroke="#1d2a3e" stroke-width="1.1"/><path d="M10.6 10.6l3.2 3.2" stroke="#1d2a3e" stroke-width="2.8" stroke-linecap="round"/><path d="M10.9 10.9l2.6 2.6" stroke="#fff" stroke-width=".9" stroke-linecap="round"/></svg>
<svg class="a" style="left:1277px;top:396px" width="17" height="12" viewBox="0 0 17 12"><rect x=".6" y=".6" width="15.8" height="10.8" rx="1" fill="none" stroke="#07101f" stroke-width="1.1"/><path d="M3 3.5h1.3M5.5 3.5h1.3M8 3.5h1.3M10.5 3.5h1.3M13 3.5h1M3 6h1.3M5.5 6h1.3M8 6h1.3M10.5 6h1.3M13 6h1M4 8.6h9" stroke="#07101f" stroke-width="1.1"/></svg>
<svg class="a" style="left:1311px;top:395px" width="16" height="14" viewBox="0 0 16 14"><path d="M1 4.5h14M1 9.5h14" stroke="#07101f" stroke-width="1.1"/><circle cx="10" cy="4.5" r="2.2" fill="#fff" stroke="#07101f" stroke-width="1.1"/><circle cx="5.5" cy="9.5" r="2.2" fill="#fff" stroke="#07101f" stroke-width="1.1"/></svg>
<svg class="a" style="left:1344px;top:394px" width="16" height="16" viewBox="0 0 16 16"><rect x="1" y="1" width="14" height="14" rx="1" fill="none" stroke="#07101f" stroke-width="1.2"/><path d="M4 7V4h3M9 4h3v3M12 9v3H9M7 12H4V9" fill="none" stroke="#07101f" stroke-width="1.1"/></svg>
<div class="a" style="left:304px;top:448px;width:1072px;height:1px;background:#e3e8f2"></div>
<div class="a" style="left:308px;top:426px;width:16px;height:16px;border:1px solid #9fadc4;border-radius:3px;background:#fff"></div>
<svg class="a" style="left:332px;top:428px" width="16" height="16" viewBox="0 0 16 16"><circle cx="8" cy="8" r="6.6" fill="none" stroke="#07101f" stroke-width="1.1"/><circle cx="8" cy="4.9" r=".9" fill="#07101f"/><path d="M6.6 7h1.8v4.4M6.5 11.5h3.5" fill="none" stroke="#07101f" stroke-width="1.1"/></svg>
<div class="a nw b12" style="left:356px;top:426px;line-height:16px;color:#07101f">@timestamp</div>
<svg class="a" style="left:446px;top:429px" width="14" height="14" viewBox="0 0 14 14"><circle cx="7" cy="7" r="6.2" fill="none" stroke="#07101f" stroke-width="1"/><path d="M7 3v4h3" fill="none" stroke="#07101f" stroke-width="1"/></svg>
<div class="a nw b12" style="left:568px;top:426px;line-height:16px;color:#07101f">Summary</div>
<svg class="a" style="left:637px;top:429px" width="14" height="14" viewBox="0 0 14 14"><circle cx="7" cy="7" r="6.2" fill="none" stroke="#07101f" stroke-width="1"/><text x="7" y="10.3" font-size="9" text-anchor="middle" fill="#07101f" font-family="Liberation Sans">?</text></svg>
<style>.row .mono{color:#1d2a3e}.row b{color:#07101f}.hl{display:inline-block;height:15px;vertical-align:top;background:#fff500;border-bottom:1px dotted #1d2a3e;color:#07101f}.sub{color:#a2b1c8}.sm{word-spacing:.7px}.w0{word-spacing:0}</style>
<div class="a" style="left:304px;top:449px;width:1072px;height:468px;overflow:hidden">
<div class="a row" style="left:0;top:0px;width:1072px;height:65px;background:#fff;border-bottom:1px solid #e3e8f2">
<div class="a" style="left:4px;top:5px;width:16px;height:16px;border:1px solid #9fadc4;border-radius:3px"></div>
<svg class="a" style="left:30px;top:7px" width="12" height="12" viewBox="0 0 12 12"><path d="M1.5 10.5l9-9M1.5 7.5v3h3M7.5 1.5h3v3" fill="none" stroke="#343741" stroke-width=".9"/></svg>
<div class="a nw mono" style="left:52px;top:6px;line-height:19px">Feb 25, 2026 @ 00:03:55.369</div>
<div class="a nw mono sm" style="left:264px;top:6px;line-height:19px;width:806px;overflow:hidden"><b>source.address</b> <span class="hl">192.168.1.114</span> <b>@timestamp</b> <span class="w0">Feb 25, 2026 @ 00:03:55.369</span> <b>agent.ephemeral_id</b> 8044910b-785d-4943-809</div>
<div class="a nw mono sm" style="left:264px;top:25px;line-height:19px;width:806px;overflow:hidden">a-9828edca769c <b>agent.hostname</b> wolf-server <b>agent.id</b> fa1d7d34-c30c-4b91-aa52-26f370caa22e <b>agent.name</b> wolf-serve</div>
<div class="a nw mono sm" style="left:264px;top:44px;line-height:19px;width:806px;overflow:hidden">r <b>agent.type</b> filebeat <b>agent.version</b> 8.19.11 <b>ecs.version</b> 8.0.0 <b>event.action</b> ssh_login <b>event.category</b> <span class="sub">[</span>authenti…</div>
</div>
<div class="a row" style="left:0;top:65px;width:1072px;height:65px;background:#e8f1ff;border-bottom:1px solid #e3e8f2">
<div class="a" style="left:4px;top:5px;width:16px;height:16px;border:1px solid #9fadc4;border-radius:3px"></div>
<svg class="a" style="left:30px;top:6px" width="12" height="12" viewBox="0 0 12 12"><path d="M1 11l4-4M2 7.2h3v3M11 1L7 5M7 1.8v3h3" fill="none" stroke="#1a6fe8" stroke-width=".9"/></svg>
<div class="a nw mono" style="left:52px;top:6px;line-height:19px">Feb 25, 2026 @ 00:03:48.748</div>
<div class="a nw mono sm" style="left:264px;top:6px;line-height:19px;width:806px;overflow:hidden"><b>source.address</b> <span class="hl">192.168.1.114</span> <b>@timestamp</b> <span class="w0">Feb 25, 2026 @ 00:03:48.748</span> <b>agent.ephemeral_id</b> 8044910b-785d-4943-809</div>
<div class="a nw mono sm" style="left:264px;top:25px;line-height:19px;width:806px;overflow:hidden">a-9828edca769c <b>agent.hostname</b> wolf-server <b>agent.id</b> fa1d7d34-c30c-4b91-aa52-26f370caa22e <b>agent.name</b> wolf-serve</div>
<div class="a nw mono sm" style="left:264px;top:44px;line-height:19px;width:806px;overflow:hidden">r <b>agent.type</b> filebeat <b>agent.version</b> 8.19.11 <b>ecs.version</b> 8.0.0 <b>event.action</b> ssh_login <b>event.category</b> authentic…</div>
</div>
<div class="a row" style="left:0;top:130px;width:1072px;height:65px;background:#fff;border-bottom:1px solid #e3e8f2">
<div class="a" style="left:4px;top:5px;width:16px;height:16px;border:1px solid #9fadc4;border-radius:3px"></div>
<svg class="a" style="left:30px;top:7px" width="12" height="12" viewBox="0 0 12 12"><path d="M1.5 10.5l9-9M1.5 7.5v3h3M7.5 1.5h3v3" fill="none" stroke="#343741" stroke-width=".9"/></svg>
<div class="a nw mono" style="left:52px;top:6px;line-height:19px">Feb 25, 2026 @ 00:03:43.535</div>
<div class="a nw mono sm" style="left:264px;top:6px;line-height:19px;width:806px;overflow:hidden"><b>source.address</b> <span class="hl">192.168.1.114</span> <b>@timestamp</b> <span class="w0">Feb 25, 2026 @ 00:03:43.535</span> <b>agent.ephemeral_id</b> 8044910b-785d-4943-809</div>
<div class="a nw mono sm" style="left:264px;top:25px;line-height:19px;width:806px;overflow:hidden">a-9828edca769c <b>agent.hostname</b> wolf-server <b>agent.id</b> fa1d7d34-c30c-4b91-aa52-26f370caa22e <b>agent.name</b> wolf-serve</div>
<div class="a nw mono sm" style="left:264px;top:44px;line-height:19px;width:806px;overflow:hidden">r <b>agent.type</b> filebeat <b>agent.version</b> 8.19.11 <b>ecs.version</b> 8.0.0 <b>event.action</b> ssh_login <b>event.category</b> authentic…</div>
</div>
<div class="a row" style="left:0;top:195px;width:1072px;height:65px;background:#f6f9fc;border-bottom:1px solid #e3e8f2">
<div class="a" style="left:4px;top:5px;width:16px;height:16px;border:1px solid #9fadc4;border-radius:3px"></div>
<svg class="a" style="left:30px;top:7px" width="12" height="12" viewBox="0 0 12 12"><path d="M1.5 10.5l9-9M1.5 7.5v3h3M7.5 1.5h3v3" fill="none" stroke="#343741" stroke-width=".9"/></svg>
<div class="a nw mono" style="left:52px;top:6px;line-height:19px">Feb 25, 2026 @ 00:03:32.948</div>
<div class="a nw mono sm" style="left:264px;top:6px;line-height:19px;width:806px;overflow:hidden"><b>source.address</b> <span class="hl">192.168.1.114</span> <b>@timestamp</b> <span class="w0">Feb 25, 2026 @ 00:03:32.948</span> <b>agent.ephemeral_id</b> 8044910b-785d-4943-809</div>
<div class="a nw mono sm" style="left:264px;top:25px;line-height:19px;width:806px;overflow:hidden">a-9828edca769c <b>agent.hostname</b> wolf-server <b>agent.id</b> fa1d7d34-c30c-4b91-aa52-26f370caa22e <b>agent.name</b> wolf-serve</div>
<div class="a nw mono sm" style="left:264px;top:44px;line-height:19px;width:806px;overflow:hidden">r <b>agent.type</b> filebeat <b>agent.version</b> 8.19.11 <b>ecs.version</b> 8.0.0 <b>event.dataset</b> system.auth <b>event.ingested</b> <span class="w0">Feb 25…</span></div>
</div>
<div class="a row" style="left:0;top:260px;width:1072px;height:65px;background:#fff;border-bottom:1px solid #e3e8f2">
<div class="a" style="left:4px;top:5px;width:16px;height:16px;border:1px solid #9fadc4;border-radius:3px"></div>
<svg class="a" style="left:30px;top:7px" width="12" height="12" viewBox="0 0 12 12"><path d="M1.5 10.5l9-9M1.5 7.5v3h3M7.5 1.5h3v3" fill="none" stroke="#343741" stroke-width=".9"/></svg>
<div class="a nw mono" style="left:52px;top:6px;line-height:19px">Feb 25, 2026 @ 00:03:16.877</div>
<div class="a nw mono sm" style="left:264px;top:6px;line-height:19px;width:806px;overflow:hidden"><b>source.address</b> <span class="hl">192.168.1.114</span> <b>@timestamp</b> <span class="w0">Feb 25, 2026 @ 00:03:16.877</span> <b>agent.ephemeral_id</b> 8044910b-785d-4943-809</div>
<div class="a nw mono sm" style="left:264px;top:25px;line-height:19px;width:806px;overflow:hidden">a-9828edca769c <b>agent.hostname</b> wolf-server <b>agent.id</b> fa1d7d34-c30c-4b91-aa52-26f370caa22e <b>agent.name</b> wolf-serve</div>
<div class="a nw mono sm" style="left:264px;top:44px;line-height:19px;width:806px;overflow:hidden">r <b>agent.type</b> filebeat <b>agent.version</b> 8.19.11 <b>ecs.version</b> 8.0.0 <b>event.action</b> ssh_login <b>event.category</b> authentic…</div>
</div>
<div class="a row" style="left:0;top:325px;width:1072px;height:65px;background:#f6f9fc;border-bottom:1px solid #e3e8f2">
<div class="a" style="left:4px;top:5px;width:16px;height:16px;border:1px solid #9fadc4;border-radius:3px"></div>
<svg class="a" style="left:30px;top:7px" width="12" height="12" viewBox="0 0 12 12"><path d="M1.5 10.5l9-9M1.5 7.5v3h3M7.5 1.5h3v3" fill="none" stroke="#343741" stroke-width=".9"/></svg>
<div class="a nw mono" style="left:52px;top:6px;line-height:19px">Feb 25, 2026 @ 00:03:10.463</div>
<div class="a nw mono sm" style="left:264px;top:6px;line-height:19px;width:806px;overflow:hidden"><b>source.address</b> <span class="hl">192.168.1.114</span> <b>@timestamp</b> <span class="w0">Feb 25, 2026 @ 00:03:10.463</span> <b>agent.ephemeral_id</b> 8044910b-785d-4943-809</div>
<div class="a nw mono sm" style="left:264px;top:25px;line-height:19px;width:806px;overflow:hidden">a-9828edca769c <b>agent.hostname</b> wolf-server <b>agent.id</b> fa1d7d34-c30c-4b91-aa52-26f370caa22e <b>agent.name</b> wolf-serve</div>
<div class="a nw mono sm" style="left:264px;top:44px;line-height:19px;width:806px;overflow:hidden">r <b>agent.type</b> filebeat <b>agent.version</b> 8.19.11 <b>ecs.version</b> 8.0.0 <b>event.action</b> ssh_login <b>event.category</b> authentic…</div>
</div>
<div class="a row" style="left:0;top:390px;width:1072px;height:65px;background:#fff;border-bottom:1px solid #e3e8f2">
<div class="a" style="left:4px;top:5px;width:16px;height:16px;border:1px solid #9fadc4;border-radius:3px"></div>
<svg class="a" style="left:30px;top:7px" width="12" height="12" viewBox="0 0 12 12"><path d="M1.5 10.5l9-9M1.5 7.5v3h3M7.5 1.5h3v3" fill="none" stroke="#343741" stroke-width=".9"/></svg>
<div class="a nw mono" style="left:52px;top:6px;line-height:19px">Feb 25, 2026 @ 00:03:07.680</div>
<div class="a nw mono sm" style="left:264px;top:6px;line-height:19px;width:806px;overflow:hidden"><b>source.address</b> <span class="hl">192.168.1.114</span> <b>@timestamp</b> <span class="w0">Feb 25, 2026 @ 00:03:07.680</span> <b>agent.ephemeral_id</b> 8044910b-785d-4943-809</div>
<div class="a nw mono sm" style="left:264px;top:25px;line-height:19px;width:806px;overflow:hidden">a-9828edca769c <b>agent.hostname</b> wolf-server <b>agent.id</b> fa1d7d34-c30c-4b91-aa52-26f370caa22e <b>agent.name</b> wolf-serve</div>
<div class="a nw mono sm" style="left:264px;top:44px;line-height:19px;width:806px;overflow:hidden">r <b>agent.type</b> filebeat <b>agent.version</b> 8.19.11 <b>ecs.version</b> 8.0.0 <b>event.action</b> ssh_login <b>event.category</b> authentic…</div>
</div>
<div class="a row" style="left:0;top:455px;width:1072px;height:65px;background:#f6f9fc;border-bottom:1px solid #e3e8f2">
<div class="a" style="left:4px;top:5px;width:16px;height:16px;border:1px solid #9fadc4;border-radius:3px"></div>
<svg class="a" style="left:30px;top:7px" width="12" height="12" viewBox="0 0 12 12"><path d="M1.5 10.5l9-9M1.5 7.5v3h3M7.5 1.5h3v3" fill="none" stroke="#343741" stroke-width=".9"/></svg>
<div class="a nw mono" style="left:52px;top:6px;line-height:19px">Feb 25, 2026 @ 00:03:01.666</div>
<div class="a nw mono sm" style="left:264px;top:6px;line-height:19px;width:806px;overflow:hidden"><b>source.address</b> <span class="hl">192.168.1.114</span> <b>@timestamp</b> <span class="w0">Feb 25, 2026 @ 00:03:01.666</span> <b>agent.ephemeral_id</b> 8044910b-785d-4943-809</div>
<div class="a nw mono sm" style="left:264px;top:25px;line-height:19px;width:806px;overflow:hidden">a-9828edca769c <b>agent.hostname</b> wolf-server <b>agent.id</b> fa1d7d34-c30c-4b91-aa52-26f370caa22e <b>agent.name</b> wolf-serve</div>
<div class="a nw mono sm" style="left:264px;top:44px;line-height:19px;width:806px;overflow:hidden">r <b>agent.type</b> filebeat <b>agent.version</b> 8.19.11 <b>ecs.version</b> 8.0.0 <b>event.action</b> ssh_login <b>event.category</b> authentic…</div>
</div>
</div>
<div class="a nw s12" style="left:312px;top:929px;line-height:18px;color:#1d2a3e">Rows per page: 100</div>
<svg class="a" style="left:441px;top:934px" width="10" height="7" viewBox="0 0 10 7"><path d="M1 1l4 4 4-4" fill="none" stroke="#1d2a3e" stroke-width="1.1"/></svg>
<svg class="a" style="left:1309px;top:931px" width="8" height="13" viewBox="0 0 8 13"><path d="M7 1L1.5 6.5 7 12" fill="none" stroke="#a2b1c8" stroke-width="1.1"/></svg>
<div class="a nw s12" style="left:1334px;top:929px;line-height:18px;color:#1750ba;font-weight:bold;text-decoration:underline">1</div>
<svg class="a" style="left:1359px;top:931px" width="8" height="13" viewBox="0 0 8 13"><path d="M1 1l5.5 5.5L1 12" fill="none" stroke="#a2b1c8" stroke-width="1.1"/></svg>
<div class="a" style="left:1377px;top:96px;width:542px;height:856px;background:#fff;border-left:1px solid #d3dae6"></div>
<div class="a nw" style="left:1394px;top:113px;line-height:22px;font-size:18px;font-weight:bold;letter-spacing:.5px;color:#07101f">Document</div>
<svg class="a" style="left:1508px;top:117px" width="13" height="14" viewBox="0 0 13 14"><path d="M1.4 1.4v10.8M11 1.2L5.6 6.8 11 12.4" fill="none" stroke="#1d2a3e" stroke-width="1"/></svg>
<svg class="a" style="left:1533px;top:117px" width="9" height="14" viewBox="0 0 9 14"><path d="M8 1.2L2.4 6.8 8 12.4" fill="none" stroke="#1d2a3e" stroke-width="1"/></svg>
<div class="a nw" style="left:1558px;top:115px;line-height:18px;color:#1750ba">2</div>
<div class="a nw" style="left:1574px;top:115px;line-height:18px;color:#1d2a3e">of</div>
<div class="a nw" style="left:1596px;top:115px;line-height:18px;color:#1d2a3e">27</div>
<svg class="a" style="left:1630px;top:117px" width="9" height="14" viewBox="0 0 9 14"><path d="M1 1.2l5.6 5.6L1 12.4" fill="none" stroke="#1d2a3e" stroke-width="1"/></svg>
<svg class="a" style="left:1652px;top:117px" width="13" height="14" viewBox="0 0 13 14"><path d="M1 1.2l5.4 5.6L1 12.4M10.6 1.4v10.8" fill="none" stroke="#1d2a3e" stroke-width="1"/></svg>
<svg class="a" style="left:1895px;top:111px" width="10" height="10" viewBox="0 0 10 10"><path d="M.5 .5l9 9M9.5 .5l-9 9" stroke="#07101f" stroke-width="1.2"/></svg>
<div class="a nw" style="left:1394px;top:151px;line-height:18px;color:#1d2a3e">Actions:</div>
<svg class="a" style="left:1463px;top:154px" width="10" height="12" viewBox="0 0 10 12"><path d="M.6 .6h5.5L9.4 3.9v7.5H.6z M6 .6v3.4h3.4" fill="none" stroke="#1750ba" stroke-width="1"/></svg>
<div class="a nw link" style="left:1482px;top:151px;line-height:18px">View single document</div>
<svg class="a" style="left:1648px;top:154px" width="12" height="12" viewBox="0 0 12 12"><path d="M.6 .6h5.5L9.4 3.9v6.5H.6z" fill="none" stroke="#1750ba" stroke-width="1"/><path d="M2.5 5.5h5M2.5 7.5h5M10.5 5v6.5H3" fill="none" stroke="#1750ba" stroke-width="1"/></svg>
<div class="a nw link" style="left:1668px;top:151px;line-height:18px">View surrounding documents</div>
<div class="a" style="left:1378px;top:192px;width:541px;height:1px;background:#e3e8f2"></div>
<div class="a nw b12" style="left:1398px;top:217px;line-height:16px;color:#1750ba">Table</div>
<div class="a nw b12" style="left:1453px;top:217px;line-height:16px;color:#07101f">JSON</div>
<div class="a" style="left:1394px;top:240px;width:510px;height:1px;background:#e3e8f2"></div>
<div class="a" style="left:1394px;top:239px;width:44px;height:2px;background:#0b64dd"></div>
<div class="btn" style="left:1394px;top:249px;width:510px;height:32px"></div>
<div class="a" style="left:1848px;top:250px;width:55px;height:30px;background:#ecf1f9;border-left:1px solid #cad3e2;border-radius:0 3px 3px 0"></div>
<svg class="a" style="left:1403px;top:257px" width="16" height="16" viewBox="0 0 16 16"><circle cx="6.5" cy="6.5" r="5.2" fill="none" stroke="#1d2a3e" stroke-width="1.1"/><path d="M10.6 10.6l3.2 3.2" stroke="#1d2a3e" stroke-width="2.8" stroke-linecap="round"/><path d="M10.9 10.9l2.6 2.6" stroke="#fff" stroke-width=".9" stroke-linecap="round"/></svg>
<div class="a nw" style="left:1426px;top:256px;line-height:18px;color:#8e9fb8">Search field names or values</div>
<svg class="a" style="left:1856px;top:259px" width="16" height="13" viewBox="0 0 16 13"><path d="M1 1.5h14M4 5.5h8M6.5 9.5h3" stroke="#07101f" stroke-width="1.1"/></svg>
<div class="a s12" style="left:1879px;top:257px;width:18px;height:16px;background:#e3e8f2;border-radius:2px;text-align:center;line-height:16px;letter-spacing:0">0</div>
<div class="a" style="left:1773px;top:289px;width:28px;height:16px;border-radius:8px;background:#c8d2e2"></div>
<div class="a" style="left:1774px;top:290px;width:14px;height:14px;border-radius:7px;background:#fff;box-shadow:0 0 1px #a2b1c8"></div>
<div class="a nw" style="left:1810px;top:288px;line-height:18px;color:#8e9fb8">Selected only</div>
<svg class="a" style="left:1400px;top:321px" width="16" height="16" viewBox="0 0 16 16"><circle cx="8" cy="8" r="6.6" fill="none" stroke="#07101f" stroke-width="1.1"/><circle cx="8" cy="4.9" r=".9" fill="#07101f"/><path d="M6.6 7h1.8v4.4M6.5 11.5h3.5" fill="none" stroke="#07101f" stroke-width="1.1"/></svg>
<div class="a nw b12" style="left:1432px;top:319px;line-height:16px;color:#07101f">Field</div>
<div class="a nw b12" style="left:1585px;top:319px;line-height:16px;color:#07101f">Value</div>
<div class="a" style="left:1394px;top:343px;width:510px;height:1px;background:#e3e8f2"></div>
<div class="a" style="left:1394px;top:344px;width:510px;height:30px;background:#fff;border-bottom:1px solid #e3e8f2"></div>
<svg class="a" style="left:1398px;top:351px" width="18" height="18" viewBox="0 0 18 18"><g transform="translate(8.6 8.2) rotate(40)"><path d="M-3.4 -9H3.4V-7.4H2.3L2.7 -2.2L5.2 1H-5.2L-2.7 -2.2L-2.3 -7.4H-3.4Z" fill="#1d2a3e"/><path d="M0 0.5V7.2" stroke="#1d2a3e" stroke-width="1.3"/></g></svg>
<div class="a" style="left:1432px;top:350px;width:16px;height:16px;border:1px solid #f0c040;border-radius:3px;background:#fffdf7"></div><svg class="a" style="left:1434px;top:352px" width="12" height="12" viewBox="0 0 12 12"><rect x="1.5" y="2.2" width="9" height="8.3" rx="1" fill="none" stroke="#8a6a10" stroke-width=".9"/><path d="M1.5 4.3h9M4 1v2M8 1v2" stroke="#8a6a10" stroke-width=".9"/><path d="M4 5.6v3.8M6 5.6v3.8M8 5.6v3.8" stroke="#a08030" stroke-width=".6" stroke-dasharray=".9 .5"/></svg>
<div class="a nw s12" style="left:1456px;top:348px;line-height:18px;color:#1d2a3e">@timestamp</div>
<div class="a nw s12" style="left:1585px;top:350px;line-height:18px;color:#1d2a3e">Feb 25, 2026 @ 00:03:48.748</div>
<div class="a" style="left:1394px;top:374px;width:510px;height:30px;background:#f6f9fc;border-bottom:1px solid #e3e8f2"></div>
<svg class="a" style="left:1398px;top:381px" width="18" height="18" viewBox="0 0 18 18"><g transform="translate(8.6 8.2) rotate(40)"><path d="M-3.4 -9H3.4V-7.4H2.3L2.7 -2.2L5.2 1H-5.2L-2.7 -2.2L-2.3 -7.4H-3.4Z" fill="#1d2a3e"/><path d="M0 0.5V7.2" stroke="#1d2a3e" stroke-width="1.3"/></g></svg>
<div class="tok" style="left:1432px;top:380px">k</div>
<div class="a nw s12" style="left:1456px;top:378px;line-height:18px;color:#1d2a3e">event.action</div>
<div class="a nw s12" style="left:1585px;top:380px;line-height:18px;color:#1d2a3e">ssh_login</div>
<div class="a" style="left:1394px;top:404px;width:510px;height:30px;background:#fff;border-bottom:1px solid #e3e8f2"></div>
<svg class="a" style="left:1398px;top:411px" width="18" height="18" viewBox="0 0 18 18"><g transform="translate(8.6 8.2) rotate(40)"><path d="M-3.4 -9H3.4V-7.4H2.3L2.7 -2.2L5.2 1H-5.2L-2.7 -2.2L-2.3 -7.4H-3.4Z" fill="#1d2a3e"/><path d="M0 0.5V7.2" stroke="#1d2a3e" stroke-width="1.3"/></g></svg>
<div class="tok" style="left:1432px;top:410px">k</div>
<div class="a nw s12" style="left:1456px;top:408px;line-height:18px;color:#1d2a3e">event.outcome</div>
<div class="a nw s12" style="left:1585px;top:410px;line-height:18px;color:#1d2a3e">failure</div>
<div class="a" style="left:1394px;top:434px;width:510px;height:30px;background:#f6f9fc;border-bottom:1px solid #e3e8f2"></div>
<svg class="a" style="left:1398px;top:441px" width="18" height="18" viewBox="0 0 18 18"><g transform="translate(8.6 8.2) rotate(40)"><path d="M-3.4 -9H3.4V-7.4H2.3L2.7 -2.2L5.2 1H-5.2L-2.7 -2.2L-2.3 -7.4H-3.4Z" fill="#1d2a3e"/><path d="M0 0.5V7.2" stroke="#1d2a3e" stroke-width="1.3"/></g></svg>
<div class="tok" style="left:1432px;top:440px">k</div>
<div class="a nw s12" style="left:1456px;top:438px;line-height:18px;color:#1d2a3e">process.name</div>
<div class="a nw s12" style="left:1585px;top:440px;line-height:18px;color:#1d2a3e">sshd</div>
<div class="a" style="left:1394px;top:464px;width:510px;height:30px;background:#fff;border-bottom:1px solid #e3e8f2"></div>
<div class="tok" style="left:1432px;top:470px">k</div>
<div class="a nw s12" style="left:1456px;top:468px;line-height:18px;color:#1d2a3e">_id</div>
<div class="a nw s12" style="left:1585px;top:470px;line-height:18px;color:#1d2a3e">eShlk5wBOjIXuG8qp0VW</div>
<div class="a" style="left:1394px;top:494px;width:510px;height:30px;background:#f6f9fc;border-bottom:1px solid #e3e8f2"></div>
<div class="tok" style="left:1432px;top:500px">k</div>
<div class="a nw s12" style="left:1456px;top:498px;line-height:18px;color:#1d2a3e">_ignored</div>
<div class="a nw s12" style="left:1585px;top:500px;line-height:18px;color:#6a7fa0">(null)</div>
<div class="a" style="left:1394px;top:524px;width:510px;height:30px;background:#fff;border-bottom:1px solid #e3e8f2"></div>
<div class="tok" style="left:1432px;top:530px">k</div>
<div class="a nw s12" style="left:1456px;top:528px;line-height:18px;color:#1d2a3e">_index</div>
<div class="a nw s12" style="left:1585px;top:530px;line-height:18px;color:#1d2a3e">.ds-filebeat-8.19.11-2026.02.17-000001</div>
<div class="a" style="left:1394px;top:554px;width:510px;height:30px;background:#f6f9fc;border-bottom:1px solid #e3e8f2"></div>
<div class="tok num" style="left:1432px;top:560px;font-size:10px">#</div>
<div class="a nw s12" style="left:1456px;top:558px;line-height:18px;color:#1d2a3e">_score</div>
<div class="a nw s12" style="left:1585px;top:560px;line-height:18px;color:#6a7fa0">(null)</div>
<div class="a" style="left:1394px;top:584px;width:510px;height:44px;background:#fff;border-bottom:1px solid #e3e8f2"></div>
<div class="tok" style="left:1432px;top:590px">k</div>
<div class="a s12" style="left:1456px;top:588px;width:120px;line-height:18px;color:#1d2a3e;word-break:break-all">agent.ephemeral_i<br>d</div>
<div class="a nw s12" style="left:1585px;top:590px;line-height:18px;color:#1d2a3e">8044910b-785d-4943-809a-9828edca769c</div>
<div class="a" style="left:1394px;top:628px;width:510px;height:30px;background:#f6f9fc;border-bottom:1px solid #e3e8f2"></div>
<div class="tok" style="left:1432px;top:634px">k</div>
<div class="a nw s12" style="left:1456px;top:632px;line-height:18px;color:#1d2a3e">agent.hostname</div>
<div class="a nw s12" style="left:1585px;top:634px;line-height:18px;color:#1d2a3e">wolf-server</div>
<div class="a" style="left:1394px;top:658px;width:510px;height:30px;background:#fff;border-bottom:1px solid #e3e8f2"></div>
<div class="tok" style="left:1432px;top:664px">k</div>
<div class="a nw s12" style="left:1456px;top:662px;line-height:18px;color:#1d2a3e">agent.id</div>
<div class="a nw s12" style="left:1585px;top:664px;line-height:18px;color:#1d2a3e">fa1d7d34-c30c-4b91-aa52-26f370caa22e</div>
<div class="a" style="left:1394px;top:688px;width:510px;height:30px;background:#f6f9fc;border-bottom:1px solid #e3e8f2"></div>
<div class="tok" style="left:1432px;top:694px">k</div>
<div class="a nw s12" style="left:1456px;top:692px;line-height:18px;color:#1d2a3e">agent.name</div>
<div class="a nw s12" style="left:1585px;top:694px;line-height:18px;color:#1d2a3e">wolf-server</div>
<div class="a" style="left:1394px;top:718px;width:510px;height:30px;background:#fff;border-bottom:1px solid #e3e8f2"></div>
<div class="tok" style="left:1432px;top:724px">k</div>
<div class="a nw s12" style="left:1456px;top:722px;line-height:18px;color:#1d2a3e">agent.type</div>
<div class="a nw s12" style="left:1585px;top:724px;line-height:18px;color:#1d2a3e">filebeat</div>
<div class="a" style="left:1394px;top:748px;width:510px;height:30px;background:#f6f9fc;border-bottom:1px solid #e3e8f2"></div>
<div class="tok" style="left:1432px;top:754px">k</div>
<div class="a nw s12" style="left:1456px;top:752px;line-height:18px;color:#1d2a3e">agent.version</div>
<div class="a nw s12" style="left:1585px;top:754px;line-height:18px;color:#1d2a3e">8.19.11</div>
<div class="a" style="left:1394px;top:778px;width:510px;height:30px;background:#fff;border-bottom:1px solid #e3e8f2"></div>
<div class="tok" style="left:1432px;top:784px">k</div>
<div class="a nw s12" style="left:1456px;top:782px;line-height:18px;color:#1d2a3e">ecs.version</div>
<div class="a nw s12" style="left:1585px;top:784px;line-height:18px;color:#1d2a3e">8.0.0</div>
<div class="a" style="left:1394px;top:808px;width:510px;height:30px;background:#f6f9fc;border-bottom:1px solid #e3e8f2"></div>
<div class="tok" style="left:1432px;top:814px">k</div>
<div class="a nw s12" style="left:1456px;top:812px;line-height:18px;color:#1d2a3e">event.category</div>
<div class="a nw s12" style="left:1585px;top:814px;line-height:18px;color:#1d2a3e">authentication</div>
<div class="a" style="left:1394px;top:838px;width:510px;height:30px;background:#fff;border-bottom:1px solid #e3e8f2"></div>
<div class="tok" style="left:1432px;top:844px">k</div>
<div class="a nw s12" style="left:1456px;top:842px;line-height:18px;color:#1d2a3e">event.dataset</div>
<div class="a nw s12" style="left:1585px;top:844px;line-height:18px;color:#1d2a3e">system.auth</div>
<div class="a" style="left:1394px;top:868px;width:510px;height:30px;background:#f6f9fc;border-bottom:1px solid #e3e8f2"></div>
<div class="a" style="left:1432px;top:874px;width:16px;height:16px;border:1px solid #f0c040;border-radius:3px;background:#fffdf7"></div><svg class="a" style="left:1434px;top:876px" width="12" height="12" viewBox="0 0 12 12"><rect x="1.5" y="2.2" width="9" height="8.3" rx="1" fill="none" stroke="#8a6a10" stroke-width=".9"/><path d="M1.5 4.3h9M4 1v2M8 1v2" stroke="#8a6a10" stroke-width=".9"/><path d="M4 5.6v3.8M6 5.6v3.8M8 5.6v3.8" stroke="#a08030" stroke-width=".6" stroke-dasharray=".9 .5"/></svg>
<div class="a nw s12" style="left:1456px;top:872px;line-height:18px;color:#1d2a3e">event.ingested</div>
<div class="a nw s12" style="left:1585px;top:874px;line-height:18px;color:#1d2a3e">Feb 25, 2026 @ 00:03:58.677</div>
<div class="a" style="left:1394px;top:901px;width:510px;height:1px;background:#e3e8f2"></div>
<div class="a nw s12" style="left:1402px;top:914px;line-height:18px;color:#1d2a3e">Rows per page: 25</div>
<svg class="a" style="left:1523px;top:919px" width="10" height="7" viewBox="0 0 10 7"><path d="M1 1l4 4 4-4" fill="none" stroke="#1d2a3e" stroke-width="1.1"/></svg>
<svg class="a" style="left:1788px;top:916px" width="8" height="13" viewBox="0 0 8 13"><path d="M7 1L1.5 6.5 7 12" fill="none" stroke="#a2b1c8" stroke-width="1.1"/></svg>
<div class="a nw" style="left:1812px;top:913px;line-height:18px;color:#1750ba;font-weight:bold;text-decoration:underline">1</div>
<div class="a nw" style="left:1837px;top:913px;line-height:18px;color:#1d2a3e">2</div>
<div class="a nw" style="left:1861px;top:913px;line-height:18px;color:#1d2a3e">3</div>
<svg class="a" style="left:1887px;top:916px" width="8" height="13" viewBox="0 0 8 13"><path d="M1 1l5.5 5.5L1 12" fill="none" stroke="#1d2a3e" stroke-width="1.1"/></svg>
</body></html>
